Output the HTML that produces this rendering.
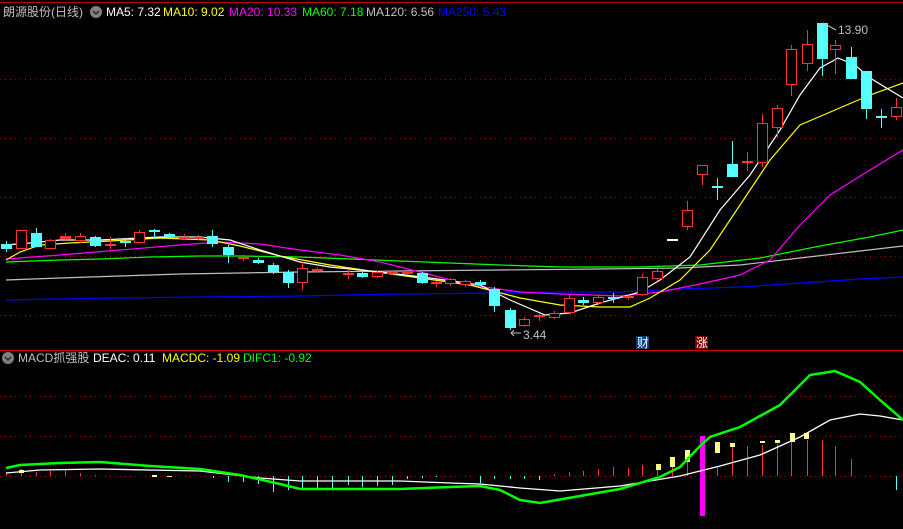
<!DOCTYPE html>
<html><head><meta charset="utf-8"><style>
html,body{margin:0;padding:0;background:#000;width:903px;height:529px;overflow:hidden}
svg{position:absolute;left:0;top:0}
.t{font-family:"Liberation Sans","Noto Sans CJK SC",sans-serif;font-size:12px}
</style></head><body>
<svg id="s" width="903" height="529" xmlns="http://www.w3.org/2000/svg">
<rect width="903" height="529" fill="#000"/>
<line x1="0" y1="2.5" x2="903" y2="2.5" stroke="#c00000"/>
<g stroke="#a00000" stroke-dasharray="1,4">
<line x1="0" y1="79.5" x2="903" y2="79.5"/><line x1="0" y1="138.5" x2="903" y2="138.5"/>
<line x1="0" y1="197.5" x2="903" y2="197.5"/><line x1="0" y1="256.5" x2="903" y2="256.5"/>
<line x1="0" y1="315.5" x2="903" y2="315.5"/>
<line x1="0" y1="396.5" x2="903" y2="396.5"/><line x1="0" y1="436.5" x2="903" y2="436.5"/>
<line x1="0" y1="476.5" x2="903" y2="476.5"/>
</g>
<line x1="0" y1="350.5" x2="903" y2="350.5" stroke="#d00000"/>
<g fill="none" stroke-width="1.2">
<polyline stroke="#0000ff" points="6,300 60,299 120,298 200,297 300,296 400,294 500,293 560,292 620,292 680,289 740,287 800,283 860,279 903,277"/>
<polyline stroke="#c0c0c0" points="6,280 60,278 120,276 180,274 240,273 300,272 400,271 500,270 600,269 680,268 740,265 800,258 860,251 903,246"/>
<polyline stroke="#00ff00" points="6,262 60,260 100,259 150,257 200,256 240,256 300,257 400,261 500,265 560,267 640,267 700,265 760,258 820,246 870,237 903,230"/>
<polyline stroke="#ff00ff" points="6,259 60,255 120,250 180,245 220,242 260,244 300,250 340,255 380,262 420,272 470,285 520,292 560,294 620,296 660,292 700,284 740,275 770,260 800,225 830,195 870,170 903,150"/>
<polyline stroke="#ffff00" points="6,260 20,252 40,245 70,243 110,241 160,238 210,240 240,246 280,256 330,265 370,271 420,278 470,285 520,298 560,305 600,307 630,307 650,298 680,280 710,250 740,205 770,160 800,125 835,110 870,95 903,83"/>
<polyline stroke="#ffffff" points="6,245 30,243 60,240 100,240 160,237 200,237 230,240 260,250 300,262 330,267 380,272 430,278 480,285 510,300 545,315 570,313 600,303 640,292 660,280 690,257 720,210 750,175 780,130 800,95 820,68 838,58 855,65 870,78 903,98"/>
</g>
<g id="c"></g>
<g id="m"></g>
<g fill="none">
<polyline stroke="#ffffff" stroke-width="1.3" points="6,473 40,470 100,469 200,471 260,478 300,481 400,481 450,483 480,484 520,488 560,491 620,486 680,476 720,466 760,455 800,437 830,420 860,414 880,416 903,420"/>
<polyline stroke="#00ff00" stroke-width="2.5" points="6,468 20,465 60,463 100,462 150,466 200,469 240,475 280,484 300,489 400,489 450,487 480,486 500,490 520,500 540,503 580,496 620,489 660,477 680,467 700,446 710,437 740,427 780,405 800,385 810,375 835,371 860,382 880,400 903,420"/>
</g>
<text class="t" x="3" y="16" fill="#c0c0c0" font-size="13">朗源股份(日线)</text>
<circle cx="96" cy="12" r="6" fill="#808080"/><path d="M93,11 L96,14 L99,11" stroke="#222" fill="none" stroke-width="1.3"/>
<text class="t" x="106" y="16" fill="#fff">MA5: 7.32</text>
<text class="t" x="163" y="16" fill="#ffff00">MA10: 9.02</text>
<text class="t" x="229" y="16" fill="#ff00ff">MA20: 10.33</text>
<text class="t" x="302" y="16" fill="#00ff00">MA60: 7.18</text>
<text class="t" x="366" y="16" fill="#c0c0c0">MA120: 6.56</text>
<text class="t" x="438" y="16" fill="#0000ff">MA250: 5.43</text>
<text class="t" x="838" y="34" fill="#c0c0c0">13.90</text>
<path d="M823,23 L836,30" stroke="#c0c0c0" fill="none"/>
<text class="t" x="523" y="339" fill="#c0c0c0">3.44</text>
<path d="M511,333 L521,333 M514,330 L511,333 L514,336" stroke="#c0c0c0" fill="none"/>
<rect x="636" y="336" width="13" height="13" fill="#0a3a7a"/><text class="t" x="637" y="347" fill="#fff" font-size="11">财</text>
<rect x="695" y="336" width="13" height="13" fill="#7a0000"/><text class="t" x="696" y="347" fill="#fff" font-size="11">涨</text>
<circle cx="8" cy="358" r="6" fill="#808080"/><path d="M5,357 L8,360 L11,357" stroke="#222" fill="none" stroke-width="1.3"/>
<text class="t" x="18" y="362" fill="#c0c0c0">MACD抓强股</text>
<text class="t" x="93" y="362" fill="#fff">DEAC: 0.11</text>
<text class="t" x="162" y="362" fill="#ffff00">MACDC: -1.09</text>
<text class="t" x="243" y="362" fill="#00ff00">DIFC1: -0.92</text>
</svg>
<script>
var NS="http://www.w3.org/2000/svg";
function el(g,t,a){var e=document.createElementNS(NS,t);for(var k in a)e.setAttribute(k,a[k]);g.appendChild(e);}
// x, top, bottom, wickTop, wickBottom, type r/c
var C=[[6,244,249,241,252,'c'],[21,230,249,230,249,'r'],[36,233,247,228,247,'c'],[50,240,249,239,249,'r'],[65,236,239,233,241,'r'],[80,236,241,233,243,'r'],[95,237,246,236,247,'c'],[110,244,245,237,249,'r'],[125,241,243,239,247,'c'],[139,232,243,230,243,'r'],[154,230,232,229,239,'c'],[169,234,237,233,238,'c'],[184,237,239,234,240,'r'],[198,237,239,235,240,'r'],[212,236,244,230,247,'c'],[228,247,255,245,263,'c'],[243,257,259,255,261,'r'],[258,260,263,258,264,'c'],[273,265,272,263,274,'c'],[288,272,283,270,288,'c'],[302,268,283,262,290,'r'],[317,269,271,268,272,'r'],[348,273,275,270,279,'r'],[362,273,277,271,278,'c'],[377,272,277,271,278,'r'],[392,272,274,271,275,'r'],[407,272,274,271,275,'r'],[422,273,283,272,284,'c'],[436,282,284,281,287,'r'],[450,279,284,278,286,'r'],[465,281,285,280,287,'r'],[480,282,285,280,286,'c'],[494,289,306,287,312,'c'],[510,310,328,308,330,'c'],[524,319,326,317,327,'r'],[539,315,317,313,321,'r'],[554,313,318,311,319,'r'],[569,298,313,294,314,'r'],[583,300,303,297,305,'c'],[598,297,303,295,305,'r'],[613,297,299,293,303,'c'],[628,296,298,295,300,'r'],[642,277,295,274,296,'r'],[657,271,279,269,281,'r'],[672,239,240,239,240,'w'],[687,210,227,201,230,'r'],[702,165,175,165,185,'r'],[717,186,188,178,200,'c'],[732,164,177,141,177,'c'],[747,161,163,152,171,'r'],[762,123,163,114,167,'r'],[777,108,128,105,138,'r'],[791,49,85,45,96,'r'],[807,44,64,30,71,'r'],[822,23,59,23,76,'c'],[835,45,50,40,74,'r'],[851,57,79,47,79,'c'],[866,71,109,71,119,'c'],[881,116,118,109,128,'c'],[896,107,117,98,120,'r']];
var g=document.getElementById('c');
C.forEach(function(c){var x=c[0],col=c[5]=='r'?'#ff3333':c[5]=='c'?'#55ffff':'#ffffff';
el(g,'line',{x1:x+.5,x2:x+.5,y1:c[3],y2:c[4],stroke:col});
var h=c[2]-c[1];
if(c[5]=='r'&&h>3)el(g,'rect',{x:x-4.5,y:c[1]+.5,width:10,height:h-1,fill:'#000',stroke:col});
else el(g,'rect',{x:x-5,y:c[1],width:11,height:Math.max(h,2),fill:col});
});
var m=document.getElementById('m');
// macd bars: x, value(y end)
var B=[[6,472,'r'],[21,469,'r'],[36,472,'r'],[50,471,'r'],[65,470,'r'],[80,473,'r'],[95,475,'r'],[125,476,'c'],[184,476,'c'],[213,478,'c'],[228,482,'c'],[243,482,'c'],[258,484,'c'],[273,492,'c'],[288,490,'c'],[302,490,'c'],[317,489,'c'],[332,488,'c'],[348,485,'c'],[362,487,'c'],[377,486,'c'],[392,485,'c'],[407,479,'c'],[422,478,'c'],[436,477,'c'],[480,483,'c'],[494,479,'c'],[510,479,'c'],[524,479,'c'],[539,480,'c'],[554,474,'r'],[569,472,'r'],[583,471,'r'],[598,469,'r'],[613,467,'r'],[628,468,'r'],[642,465,'r'],[657,465,'r'],[672,466,'r'],[687,457,'r'],[717,467,'r'],[732,443,'r'],[747,446,'r'],[762,445,'r'],[777,444,'r'],[791,441,'r'],[807,440,'r'],[822,440,'r'],[835,446,'r'],[851,459,'r'],[866,476,'r'],[881,476,'c'],[896,490,'c']];
B.forEach(function(b){var col=b[2]=='r'?'#ff3333':'#55ffff';el(m,'line',{x1:b[0]+.5,x2:b[0]+.5,y1:476,y2:b[1],stroke:col});});
el(m,'rect',{x:700,y:436,width:5,height:80,fill:'#ff00ff'});
[[656,464,5,6],[670,457,5,10],[685,450,5,12],[715,442,5,11],[730,443,5,4],[760,441,5,2],[775,440,5,3],[790,433,5,9],[804,433,5,6],[19,470,5,3],[152,475,5,2],[167,476,5,1]].forEach(function(r){el(m,'rect',{x:r[0],y:r[1],width:r[2],height:r[3],fill:'#ffff88'});});
</script>
</body></html>
